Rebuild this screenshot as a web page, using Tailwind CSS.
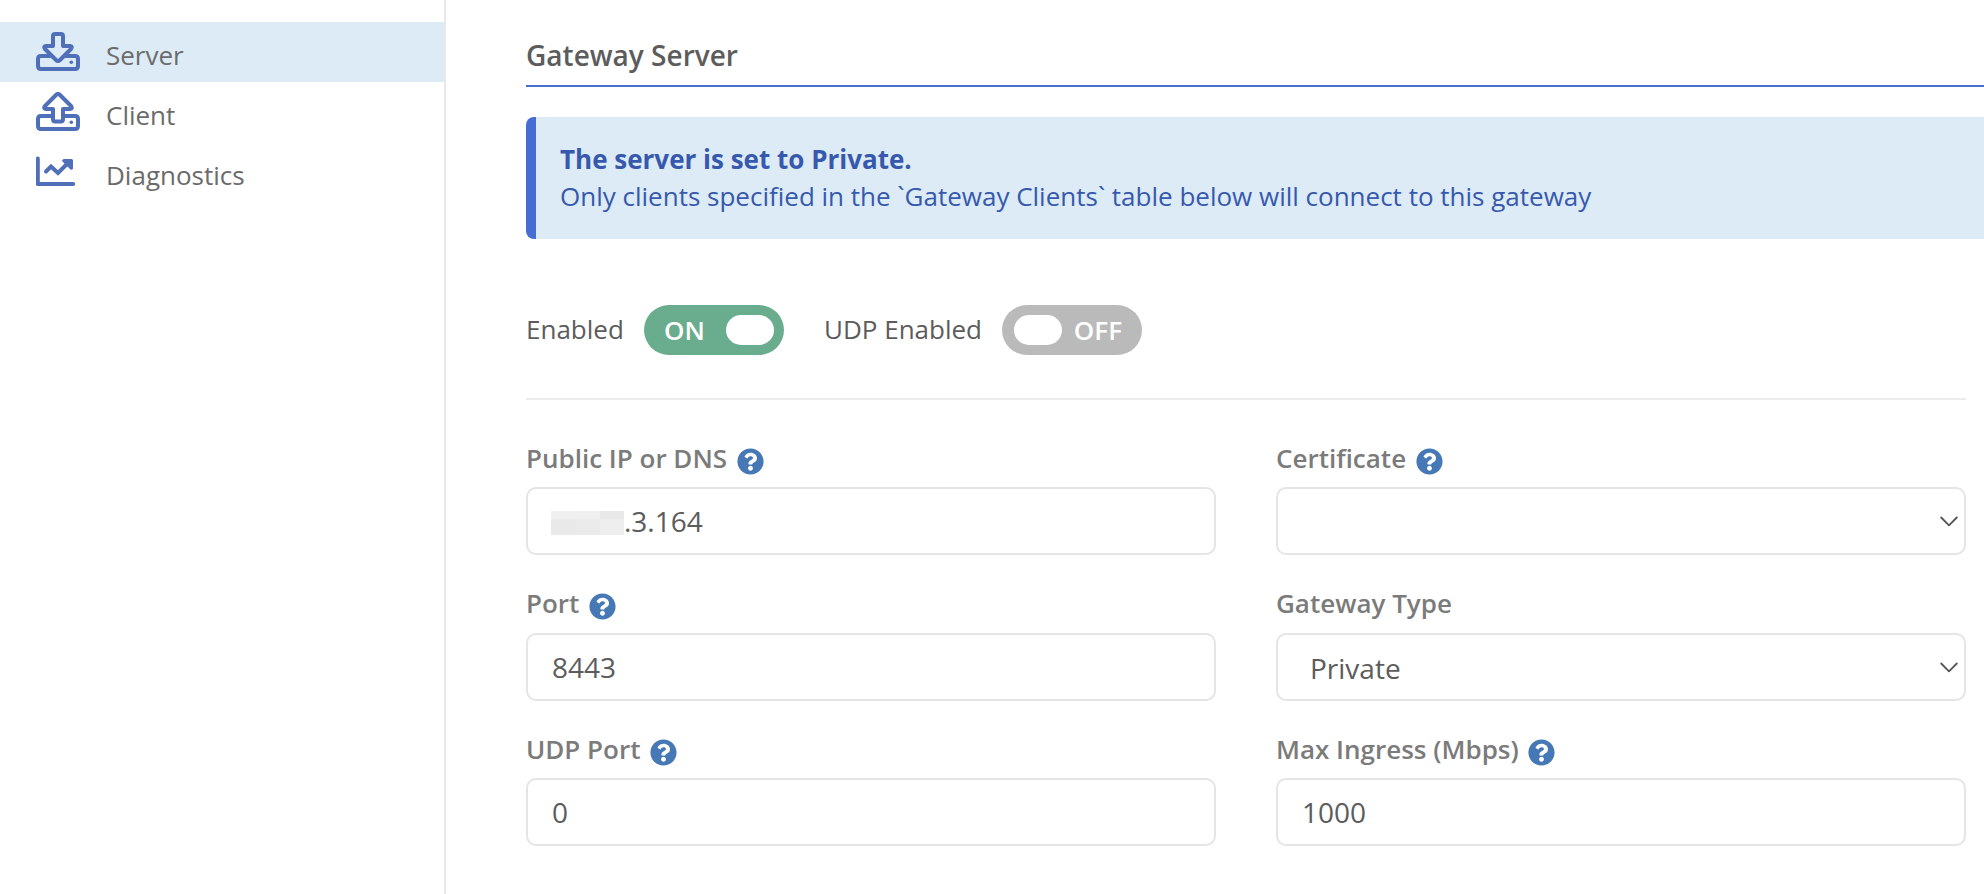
<!DOCTYPE html>
<html lang="en">
<head>
<meta charset="utf-8">
<title>Gateway Server</title>
<script src="https://cdn.jsdelivr.net/npm/@tailwindcss/browser@4"></script>
</head>
<body class="flex h-[894px] overflow-hidden bg-white font-['Open_Sans',sans-serif] text-[26px] text-[#5c5c5c]">
<svg class="hidden">
  <symbol id="help" viewBox="0 0 512 512"><path fill="currentColor" d="M504 256c0 136.997-111.043 248-248 248S8 392.997 8 256C8 119.083 119.043 8 256 8s248 111.083 248 248zM262.655 90c-54.497 0-89.255 22.957-116.549 63.758-3.536 5.286-2.353 12.415 2.715 16.258l34.699 26.31c5.205 3.947 12.621 3.008 16.665-2.122 17.864-22.658 30.113-35.797 57.303-35.797 20.429 0 45.698 13.148 45.698 32.958 0 14.976-12.363 22.667-32.534 33.976C247.128 238.528 216 254.941 216 296v4c0 6.627 5.373 12 12 12h56c6.627 0 12-5.373 12-12v-1.333c0-28.462 83.186-29.647 83.186-106.667 0-58.002-60.165-102-116.531-102zM256 338c-25.365 0-46 20.635-46 46 0 25.364 20.635 46 46 46s46-20.636 46-46c0-25.365-20.635-46-46-46z"/></symbol>
</svg>
<aside class="w-[446px] shrink-0 border-r-2 border-[#e8e8e8] pt-[22px] text-[#6b6b6b]">
  <nav>
    <a class="flex h-[60px] items-center bg-[#ddebf6] pl-9">
      <svg class="h-10 w-[70px] shrink-0 text-[#4f6fb8]" viewBox="36 32 70 40" fill="none" stroke="currentColor" stroke-width="4" stroke-linejoin="round" stroke-linecap="round"><path d="M50 56H41Q38 56 38 59V66Q38 69 41 69H75Q78 69 78 66V59Q78 56 75 56H66"/><path d="M53 36Q53 34 55 34H61Q63 34 63 36V46H70Q73 46.500 71 49L60 60Q58 62 56 60L45 49Q43 46.500 46 46H53Z"/><circle cx="71.300" cy="62.300" r="1.800" fill="currentColor" stroke="none"/></svg>
      <span class="pt-[7px]">Server</span>
    </a>
    <a class="flex h-[60px] items-center pl-9">
      <svg class="h-10 w-[70px] shrink-0 text-[#4f6fb8]" viewBox="36 92 70 40" fill="none" stroke="currentColor" stroke-width="4" stroke-linejoin="round" stroke-linecap="round"><path d="M53 116H41Q38 116 38 119V126Q38 129 41 129H75Q78 129 78 126V119Q78 116 75 116H63"/><path d="M53 119Q53 121.500 55 121.500H61Q63 121.500 63 119V109H70Q73 108.500 71 106L60 95Q58 93 56 95L45 106Q43 108.500 46 109H53Z"/><circle cx="71.300" cy="122.300" r="1.800" fill="currentColor" stroke="none"/></svg>
      <span class="pt-[7px]">Client</span>
    </a>
    <a class="flex h-[60px] items-center pl-9">
      <svg class="h-10 w-[70px] shrink-0 text-[#4f6fb8]" viewBox="36 152 70 40" fill="none" stroke="currentColor" stroke-width="4" stroke-linejoin="round" stroke-linecap="round"><path d="M37.800 158.500V184H73.200"/><path stroke-linejoin="miter" d="M46 171.500L51 166.500L58 173L66 165"/><path fill="currentColor" stroke="none" d="M63.500 159H71.500Q73 159 73 160.500V168.500Q72 170.500 70.500 169.500L62.500 161.500Q61.500 160 63.500 159Z"/></svg>
      <span class="pt-[7px]">Diagnostics</span>
    </a>
  </nav>
</aside>
<main class="min-w-0 flex-1 pl-20">
  <h1 class="h-[87px] border-b-2 border-[#456dd2] pt-9 text-[28px] font-semibold leading-[38px] text-[#5c5c5c]">Gateway Server</h1>
  <div class="mt-[30px] h-[122px] rounded-l-lg border-l-[10px] border-[#456dd2] bg-[#ddebf6] py-6 pl-6 leading-[37px] text-[#3659ae]">
    <p class="font-bold">The server is set to Private.</p>
    <p>Only clients specified in the `Gateway Clients` table below will connect to this gateway</p>
  </div>
  <div class="mr-[18px] flex h-[161px] items-start border-b-2 border-[#ececec] pt-[66px]">
    <span class="w-[118px] leading-[48px]">Enabled</span>
    <span class="flex h-[50px] w-[140px] items-center justify-between rounded-full bg-[#6aad8e] pl-5 pr-2.5 text-white"><b class="font-semibold">ON</b><i class="h-[30px] w-12 rounded-full bg-white"></i></span>
    <span class="ml-10 w-[178px] leading-[48px]">UDP Enabled</span>
    <span class="flex h-[50px] w-[140px] items-center justify-between rounded-full bg-[#bababa] pl-3 pr-5 text-white"><i class="h-[30px] w-12 rounded-full bg-white"></i><b class="font-semibold">OFF</b></span>
  </div>
  <form class="mr-[18px] grid grid-cols-2 gap-x-[60px] pt-[37px]">
    <div class="h-[146px]">
      <label class="flex h-[50px] items-start gap-[9.5px] pt-1 font-semibold leading-[34px] text-[#7b7b7b]">Public IP or DNS <svg class="mt-[7px] size-[27px] text-[#4678b6]"><use href="#help"/></svg></label>
      <div class="flex h-[68px] items-center rounded-[10px] border-2 border-[#e5e5e5] pl-[23px] text-[28px]">
        <span class="mt-1 grid h-6 w-[73px] grid-cols-[25px_24px_24px] grid-rows-[8px_16px]"><i class="bg-[#f0f0f0]"></i><i class="bg-[#efefef]"></i><i class="bg-[#e8e8e8]"></i><i class="bg-[#e9e9e9]"></i><i class="bg-[#ebebeb]"></i><i class="bg-[#eeeeee]"></i></span><span>.3.164</span>
      </div>
    </div>
    <div class="h-[146px]">
      <label class="flex h-[50px] items-start gap-[9.5px] pt-1 font-semibold leading-[34px] text-[#7b7b7b]">Certificate <svg class="mt-[7px] size-[27px] text-[#4678b6]"><use href="#help"/></svg></label>
      <div class="flex h-[68px] items-center justify-end rounded-[10px] border-2 border-[#e5e5e5] pr-[6px]">
        <svg class="h-[11px] w-[18px]" viewBox="0 0 18 11" fill="none" stroke="#555" stroke-width="1.800" stroke-linecap="round" stroke-linejoin="round"><path d="M1.200 1.500L9 9.300L16.800 1.500"/></svg>
      </div>
    </div>
    <div class="h-[145px]">
      <label class="flex h-[50px] items-start gap-[9.5px] pt-[3px] font-semibold leading-[34px] text-[#7b7b7b]">Port <svg class="mt-[7px] size-[27px] text-[#4678b6]"><use href="#help"/></svg></label>
      <div class="flex h-[68px] items-center rounded-[10px] border-2 border-[#e5e5e5] pl-6 text-[28px]">8443</div>
    </div>
    <div class="h-[145px]">
      <label class="flex h-[50px] items-start gap-[9.5px] pt-[3px] font-semibold leading-[34px] text-[#7b7b7b]">Gateway Type</label>
      <div class="flex h-[68px] items-center justify-between rounded-[10px] border-2 border-[#e5e5e5] pl-8 pr-[6px] text-[28px]"><span class="pt-0.5">Private</span>
        <svg class="h-[11px] w-[18px]" viewBox="0 0 18 11" fill="none" stroke="#555" stroke-width="1.800" stroke-linecap="round" stroke-linejoin="round"><path d="M1.200 1.500L9 9.300L16.800 1.500"/></svg>
      </div>
    </div>
    <div class="h-[145px]">
      <label class="flex h-[50px] items-start gap-[9.5px] pt-1 font-semibold leading-[34px] text-[#7b7b7b]">UDP Port <svg class="mt-[7px] size-[27px] text-[#4678b6]"><use href="#help"/></svg></label>
      <div class="flex h-[68px] items-center rounded-[10px] border-2 border-[#e5e5e5] pl-6 text-[28px]">0</div>
    </div>
    <div class="h-[145px]">
      <label class="flex h-[50px] items-start gap-[9.5px] pt-1 font-semibold leading-[34px] text-[#7b7b7b]">Max Ingress (Mbps) <svg class="mt-[7px] size-[27px] text-[#4678b6]"><use href="#help"/></svg></label>
      <div class="flex h-[68px] items-center rounded-[10px] border-2 border-[#e5e5e5] pl-6 text-[28px]">1000</div>
    </div>
  </form>
</main>
</body>
</html>
